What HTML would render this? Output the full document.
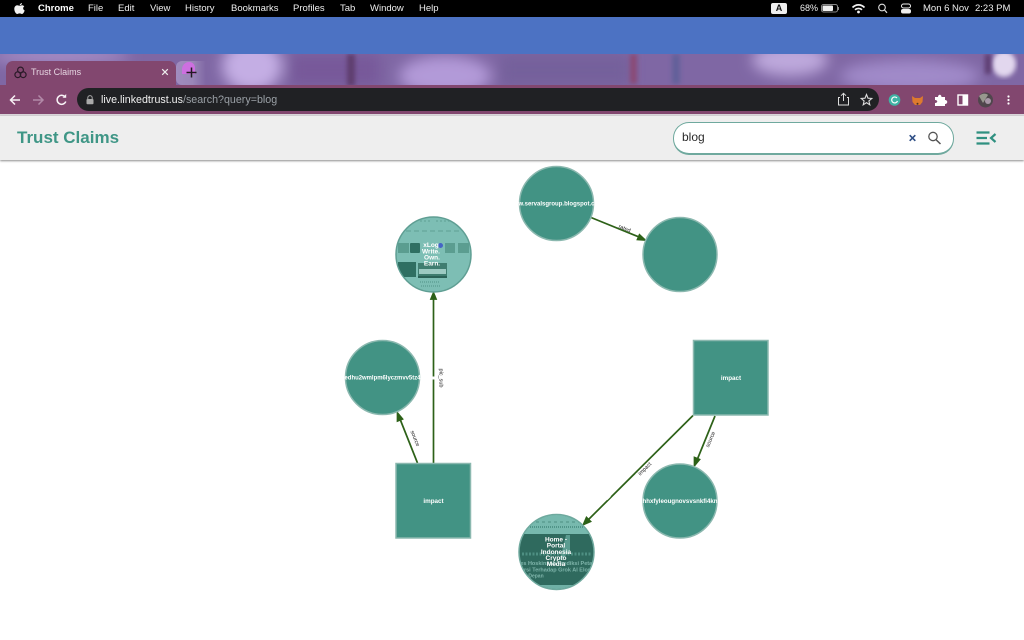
<!DOCTYPE html>
<html lang="en"><head><meta charset="utf-8"><title>Trust Claims</title>
<style>
html,body{margin:0;padding:0;width:1024px;height:640px;overflow:hidden;background:#fff;font-family:"Liberation Sans",sans-serif}
#w{position:absolute;left:0;top:0;width:1024px;height:640px;overflow:hidden;filter:blur(.3px)}
.a{position:absolute}
.m{position:absolute;top:0;height:17px;line-height:17px;font-size:9.5px;color:#eee;white-space:nowrap}
</style></head><body><div id="w">
<div class="a" style="left:0;top:0;width:1024px;height:17px;background:#000"></div>
<div class="a" style="left:0;top:17px;width:1024px;height:37px;background:#4c72c3"></div>
<svg class="a" style="left:0;top:54px" width="1024" height="32" viewBox="0 0 1024 32">
<defs><filter id="b"><feGaussianBlur stdDeviation="7"/></filter><filter id="b2"><feGaussianBlur stdDeviation="2.500"/></filter></defs>
<rect width="1024" height="32" fill="#7f67a4"/>
<g filter="url(#b)">
<ellipse cx="252" cy="12" rx="30" ry="26" fill="#c4aee4"/>
<ellipse cx="445" cy="22" rx="46" ry="20" fill="#b29ad8"/>
<rect x="290" y="0" width="90" height="32" fill="#77599a"/>
<rect x="500" y="0" width="130" height="32" fill="#75609b"/>
<ellipse cx="790" cy="6" rx="38" ry="16" fill="#bda8dc"/>
<ellipse cx="910" cy="22" rx="70" ry="16" fill="#a08ac9"/>
<ellipse cx="60" cy="2" rx="70" ry="8" fill="#a78fc8"/>
</g>
<ellipse cx="1004" cy="10" rx="12" ry="13" fill="#e2d7ee" filter="url(#b2)"/>
<g filter="url(#b2)"><rect x="347" y="0" width="8" height="32" fill="#5f3c6e"/><rect x="630" y="0" width="7" height="30" fill="#8a4a74"/><rect x="672" y="0" width="8" height="30" fill="#62619a"/><rect x="985" y="0" width="6" height="20" fill="#5c3a70"/></g>
</svg>
<div class="a" style="left:176px;top:61px;width:30px;height:24px;background:linear-gradient(90deg,#a08cbe 0%,#9a86b8 55%,rgba(154,134,184,0) 100%);border-radius:6px 0 0 6px"></div>
<div class="a" style="left:6px;top:61px;width:170px;height:25px;background:#82476f;border-radius:7px 7px 0 0"></div>
<div class="a" style="left:0;top:85px;width:1024px;height:30px;background:#82476f"></div>
<div class="a" style="left:0;top:114px;width:1024px;height:2px;background:#d8d4d8"></div>
<div class="a" style="left:182px;top:62px;width:13px;height:12px;background:#cd6fe0;border-radius:10px 8px 0 0"></div>
<div class="a" style="left:77px;top:88px;width:802px;height:23px;background:#202124;border-radius:12px"></div>

<svg class="a" style="left:13px;top:2px" width="13" height="13" viewBox="0 0 13 13"><path d="M6.600 3.200C7 1.800 8 1.100 9 1 9 2.300 8 3.300 6.600 3.200ZM6.500 3.800C7.500 3.800 8 3.200 9.200 3.200 10 3.200 10.800 3.700 11.300 4.400 9.600 5.400 9.900 7.800 11.700 8.500 11.200 9.900 10.200 12 9 12 8 12 7.800 11.400 6.600 11.400 5.400 11.400 5.100 12 4.200 12 2.900 12 1.300 9.300 1.300 7 1.300 4.700 2.800 3.300 4.200 3.300 5.100 3.300 5.800 3.800 6.500 3.800Z" fill="#f2f2f2"/></svg>
<div class="m" style="left:38px;font-weight:bold;color:#fff">Chrome</div>
<div class="m" style="left:88px">File</div><div class="m" style="left:118px">Edit</div><div class="m" style="left:150px">View</div>
<div class="m" style="left:185px">History</div><div class="m" style="left:231px">Bookmarks</div><div class="m" style="left:293px">Profiles</div>
<div class="m" style="left:340px">Tab</div><div class="m" style="left:370px">Window</div><div class="m" style="left:419px">Help</div>
<div class="a" style="left:771px;top:3px;width:16px;height:11px;background:#eee;border-radius:2px;color:#111;font-size:9px;font-weight:bold;text-align:center;line-height:11px">A</div>
<div class="m" style="left:800px;font-size:9px">68%</div>
<svg class="a" style="left:820px;top:3px" width="200" height="12" viewBox="820 3 200 12">
<rect x="821.500" y="4.500" width="16" height="7.500" rx="2" fill="none" stroke="#888"/><rect x="822.500" y="5.500" width="10.500" height="5.500" rx="1" fill="#eee"/><rect x="838" y="7" width="1" height="3" fill="#888"/>
<path d="M852.500 7.500C856 4 861 4 864.500 7.500M855 9.800C857 8 860 8 862 9.800" fill="none" stroke="#f2f2f2" stroke-width="1.700"/><circle cx="858.500" cy="12" r="1.400" fill="#f2f2f2"/>
<circle cx="882" cy="7.500" r="3.300" fill="none" stroke="#ddd" stroke-width="1.100"/><path d="M884.500 10L887 12.800" stroke="#ddd" stroke-width="1.200"/>
<rect x="901.500" y="4" width="9" height="4" rx="2" fill="none" stroke="#eee"/><rect x="901" y="9" width="10" height="4.500" rx="2" fill="#eee"/>
</svg>
<div class="m" style="left:923px">Mon 6 Nov</div><div class="m" style="left:975px">2:23 PM</div>

<svg class="a" style="left:14px;top:66px" width="13" height="13" viewBox="0 0 13 13" fill="none" stroke="#2a1a28" stroke-width="1.200"><circle cx="6.500" cy="4" r="2.900"/><circle cx="3.800" cy="8.700" r="2.900"/><circle cx="9.200" cy="8.700" r="2.900"/></svg>
<div class="a" style="left:31px;top:66px;font-size:9px;line-height:13px;color:#e6d6e2">Trust Claims</div>
<svg class="a" style="left:161px;top:68px" width="8" height="8" viewBox="0 0 8 8"><path d="M1.200 1.200L6.800 6.800M6.800 1.200L1.200 6.800" stroke="#eee" stroke-width="1.200"/></svg>
<svg class="a" style="left:186px;top:67px" width="11" height="11" viewBox="0 0 11 11"><path d="M5.500 .5V10.500M.5 5.500H10.500" stroke="#221a22" stroke-width="1.500"/></svg>

<svg class="a" style="left:0;top:85px" width="95" height="30" viewBox="0 0 95 30" fill="none" stroke-width="1.500">
<path d="M20 15H11M15 10.500L10.500 15L15 19.500" stroke="#f8f2f6"/>
<path d="M33 15H43M38.500 10.500L43 15L38.500 19.500" stroke="#b28aa8"/>
<path d="M65.500 12.500A4.500 4.500 0 1 0 65.800 16.500" stroke="#f8f2f6"/><path d="M62.500 12.700H66.200V9Z" fill="#f8f2f6" stroke="none"/>
</svg>
<svg class="a" style="left:85px;top:95px" width="10" height="10" viewBox="0 0 10 10"><path d="M2.800 4V2.800A2.200 2.200 0 0 1 7.200 2.800V4" fill="none" stroke="#aaa"/><rect x="1.500" y="4" width="7" height="5.200" rx="1" fill="#aaa"/></svg>
<div class="a" style="left:101px;top:93px;font-size:10.700px;line-height:14px;white-space:nowrap;color:#f1f1f1">live.linkedtrust.us<span style="color:#9aa0a6">/search?query=blog</span></div>

<svg class="a" style="left:835px;top:90px" width="189" height="20" viewBox="835 90 189 20">
<path d="M840 97.500H838.500V105H848.500V97.500H847M843.500 101V93.500M841 95.700L843.500 93.300L846 95.700" fill="none" stroke="#ddd" stroke-width="1"/>
<path d="M866.500 94.500L868 98.200L871.800 98.500L868.900 101L869.800 104.800L866.500 102.700L863.200 104.800L864.100 101L861.200 98.500L865 98.200Z" fill="none" stroke="#ddd" stroke-width="1.100"/>
<circle cx="894.500" cy="100" r="5.800" fill="#3fb3a5"/><path d="M897 98A3 3 0 1 0 897.500 101" fill="none" stroke="#fff" stroke-width="1.200"/>
<path d="M912 96L915 98H920L923 96L922.500 102L920 105H915L912.500 102Z" fill="#dd7a2e"/><circle cx="917.500" cy="103.800" r="1" fill="#4b3322"/>
<path d="M935 97H938C938 94 941.500 94 941.500 97H945V100C948 100 948 104 945 104V106H935V103C938 103 938 100 935 100Z" fill="#fff"/>
<rect x="958" y="95" width="9.500" height="10" fill="none" stroke="#fff" stroke-width="1.400"/><rect x="962.500" y="95" width="5" height="10" fill="#fff"/>
<circle cx="985.500" cy="100" r="7.500" fill="#4f464c"/><circle cx="988" cy="101" r="3" fill="#a898a8"/><path d="M979 96C982 93 986 93 988 95L983 103Z" fill="#98988f"/>
<circle cx="1008.500" cy="96.500" r="1.100" fill="#fff"/><circle cx="1008.500" cy="100" r="1.100" fill="#fff"/><circle cx="1008.500" cy="103.500" r="1.100" fill="#fff"/>
</svg>

<div class="a" style="left:0;top:116px;width:1024px;height:44px;background:#eeeeee;box-shadow:0 1px 2px 0 rgba(0,0,0,.45)"></div>
<div class="a" style="left:17px;top:127px;font-size:17px;line-height:22px;font-weight:bold;color:#3f9686">Trust Claims</div>
<div class="a" style="left:672.500px;top:122px;width:279px;height:30px;background:#fff;border:1.500px solid #6fa99e;border-bottom-width:2px;border-radius:16px"></div>
<div class="a" style="left:682px;top:130px;font-size:12px;line-height:15px;color:#2b2b2b">blog</div>
<svg class="a" style="left:905px;top:130px" width="45" height="16" viewBox="905 130 45 16">
<path d="M909.700 135.200L915.300 140.800M915.300 135.200L909.700 140.800" stroke="#2f4f86" stroke-width="1.600"/>
<circle cx="933" cy="136.500" r="4.200" fill="none" stroke="#555" stroke-width="1.300"/><path d="M936 139.700L940.500 144" stroke="#555" stroke-width="1.500"/>
</svg>
<svg class="a" style="left:975px;top:130px" width="22" height="16" viewBox="0 0 22 16" fill="none" stroke="#2f9080" stroke-width="2.200"><path d="M1.500 2.500H14.500M1.500 8H12M1.500 13.500H14.500M20.500 4L16 8L20.500 12"/></svg>

<svg class="a" style="left:0;top:160px" width="1024" height="480" viewBox="0 160 1024 480" font-family="Liberation Sans, sans-serif" text-anchor="middle">
<defs>
<clipPath id="c1"><circle cx="433.500" cy="254.500" r="37"/></clipPath>
<clipPath id="c2"><circle cx="556.500" cy="552" r="37"/></clipPath>
</defs>
<g stroke="#2d6118" stroke-width="1.700" fill="#2d6118">
<path d="M591 217.500L644 239" fill="none"/><path d="M645 240L637.500 239.500L639.500 234.800Z"/>
<path d="M433.500 463V294" fill="none"/><path d="M433.500 293L431 299H436Z"/><path d="M431.500 296H435.500" fill="none"/>
<path d="M417.500 463L398 414" fill="none"/><path d="M397.500 413L397.500 421L402.500 419Z"/>
<path d="M693 415.500L584 524" fill="none"/><path d="M583.500 524.500L586.500 517.500L590.500 521.500Z"/>
<path d="M715 416L695 465" fill="none"/><path d="M694.500 465.500L694.500 457.500L699.500 459.500Z"/>
</g>
<g fill="#222" font-size="5.500">
<text transform="translate(624 230) rotate(22)">rated</text>
<text transform="translate(439.500 378) rotate(90)">pic_sub</text>
<text transform="translate(413.500 439) rotate(68)">source</text>
<text transform="translate(646 470) rotate(-45)">impact</text>
<text transform="translate(712 440) rotate(-67)">source</text>
</g>
<rect x="606" y="497" width="5" height="2" fill="#fff" transform="rotate(-45 608 498)"/>
<rect x="430" y="376.500" width="8" height="3" fill="#fff"/>

<g stroke="#8bb8af" stroke-width="1.500" fill="#429384">
<circle cx="556.500" cy="203.500" r="37"/>
<circle cx="680" cy="254.500" r="37"/>
<circle cx="382.500" cy="377.500" r="37"/>
<circle cx="680" cy="501" r="37"/>
<rect x="693.500" y="340.500" width="74.500" height="74.500"/>
<rect x="396" y="463.500" width="74.500" height="74.500"/>
</g>

<circle cx="433.500" cy="254.500" r="37.500" fill="#7dbeb4" stroke="#5f9e93" stroke-width="1.500"/>
<g clip-path="url(#c1)">
<path d="M398 231H470" stroke="#5ea095" stroke-dasharray="5 3" stroke-width="1"/>
<path d="M420 221H430M436 221H450" stroke="#5ea095" stroke-dasharray="2 2"/>
<g fill="#5b9d90"><rect x="398" y="243" width="11" height="10"/><rect x="445" y="243" width="10" height="10"/><rect x="458" y="243" width="11" height="10"/></g>
<rect x="410" y="243" width="10" height="10" rx="1" fill="#2f6f62"/>
<rect x="398" y="262" width="18" height="15" fill="#2f6f62"/>
<rect x="418" y="263" width="29" height="15" fill="#3f7d70"/>
<rect x="419" y="269" width="27" height="5" fill="#9ccac2"/>
<path d="M418 277H447" stroke="#235a4f" stroke-width="1.500"/>
<path d="M420 282H440M421 286H441" stroke="#5ea095" stroke-dasharray="1 1" stroke-width="1.500"/>
</g>
<circle cx="440.500" cy="245.500" r="2.500" fill="#4565c5"/>

<circle cx="556.500" cy="552" r="37.500" fill="#2f6a5e" stroke="#6fa99e" stroke-width="1.500"/>
<g clip-path="url(#c2)">
<rect x="518" y="514" width="78" height="20" fill="#77b9ae"/>
<path d="M530 522H585" stroke="#4d8f82" stroke-dasharray="3 3"/>
<path d="M520 527H595" stroke="#44887b" stroke-dasharray="1 1" stroke-width="1.500"/>
<rect x="518" y="585" width="78" height="6" fill="#6fb0a5"/>
<path d="M560 560L566 535H570L570 552Z" fill="#5b9c90"/>
<path d="M522 554H592" stroke="#4e8f82" stroke-dasharray="2 1.500" stroke-width="3"/>
<g fill="#7fb5ab" font-size="5.500" font-weight="bold"><text x="557" y="565">Yes Hoskinson Prediksi Petani</text><text x="557" y="571.500">Konversi Terhadap Grok AI Elon Musk</text><text x="536" y="577.500" font-size="5">Depan</text></g>
</g>

<g fill="#fff" font-weight="bold" font-size="6.300">
<text x="556.500" y="205.500" textLength="76" lengthAdjust="spacingAndGlyphs">w.servalsgroup.blogspot.c</text>
<text x="382.500" y="379.500" textLength="76" lengthAdjust="spacingAndGlyphs">edhu2wmlpm6lyczmvv5tz4</text>
<text x="680" y="503" textLength="75" lengthAdjust="spacingAndGlyphs">hhxfyleougnovsvsnkfi4kn</text>
<text x="731" y="380">impact</text>
<text x="433.500" y="503">impact</text>
<g font-size="6.500"><text x="431" y="247">xLog</text><text x="431" y="253.300">Write.</text><text x="432" y="259.500">Own.</text><text x="432" y="265.700">Earn.</text></g>
<g font-size="6.500"><text x="556" y="541.500">Home -</text><text x="556" y="547.700">Portal</text><text x="556" y="553.800">Indonesia</text><text x="556" y="560">Crypto</text><text x="556" y="566">Media</text></g>
</g>
</svg>
</div></body></html>
